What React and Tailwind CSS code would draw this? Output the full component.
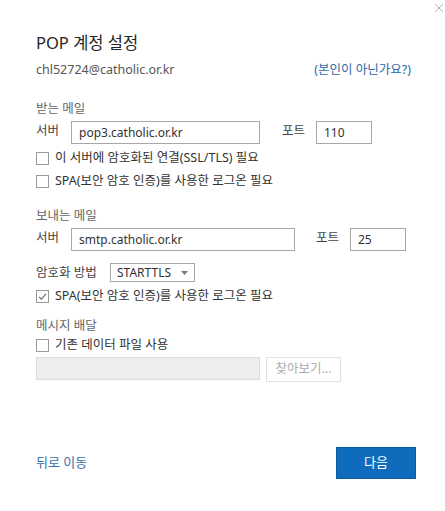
import React from 'react';

const font = { fontFamily: '"Noto Sans", "Noto Sans CJK KR", sans-serif' };

function Check({ checked }) {
  return (
    <span className="w-[13px] h-[13px] border border-[#9a9a9a] bg-white flex items-center justify-center shrink-0">
      {checked && (
        <svg width="9" height="9" viewBox="0 0 9 9" fill="none">
          <path d="M1 4.8 L3.4 7.2 L8 1.8" stroke="#6b6b6b" strokeWidth="1.1" />
        </svg>
      )}
    </span>
  );
}

function CheckRow({ checked, label, className = '' }) {
  return (
    <label className={`flex items-center gap-[6px] h-[20px] text-[12.5px] leading-[20px] text-[#333] ${className}`}>
      <Check checked={checked} />
      <span>{label}</span>
    </label>
  );
}

function TextBox({ value, className = '' }) {
  return (
    <div className={`h-[23px] border border-[#a8a8a8] bg-white px-[7px] flex items-center text-[12px] text-[#333] ${className}`}>
      {value}
    </div>
  );
}

export default function App() {
  return (
    <div className="w-[445px] h-[511px] bg-white flex flex-col" style={font}>
      {/* 닫기 */}
      <div className="flex justify-end pt-[3px] pr-[1px] h-[14px]">
        <svg width="10" height="10" viewBox="0 0 10 10">
          <path d="M1 1 L9 9 M9 1 L1 9" stroke="#b5b5b5" strokeWidth="1" />
        </svg>
      </div>

      <div className="px-[36px] flex flex-col">
        <h1 className="mt-[17px] text-[16.5px] leading-[24px] text-[#262626]">POP 계정 설정</h1>
        <div className="mt-[5px] flex justify-between items-center h-[20px] text-[12.5px] leading-[20px]">
          <span className="text-[#555]">chl52724@catholic.or.kr</span>
          <a className="text-[#2f6aa6] mr-[-2px]">(본인이 아닌가요?)</a>
        </div>

        {/* 받는 메일 */}
        <div className="mt-[19px] h-[20px] text-[12.5px] leading-[20px] text-[#666]">받는 메일</div>
        <div className="mt-[2px] flex items-start h-[23px]">
          <span className="w-[35px] text-[12.5px] leading-[20px] text-[#444]">서버</span>
          <TextBox value="pop3.catholic.or.kr" className="w-[189px]" />
          <span className="ml-[22px] w-[34px] text-[12.5px] leading-[20px] text-[#444]">포트</span>
          <TextBox value="110" className="w-[56px]" />
        </div>
        <CheckRow className="mt-[4px]" label="이 서버에 암호화된 연결(SSL/TLS) 필요" />
        <CheckRow className="mt-[3px]" label="SPA(보안 암호 인증)를 사용한 로그온 필요" />

        {/* 보내는 메일 */}
        <div className="mt-[15px] h-[20px] text-[12.5px] leading-[20px] text-[#666]">보내는 메일</div>
        <div className="mt-[2px] flex items-start h-[23px]">
          <span className="w-[35px] text-[12.5px] leading-[20px] text-[#444]">서버</span>
          <TextBox value="smtp.catholic.or.kr" className="w-[224px]" />
          <span className="ml-[21px] w-[34px] text-[12.5px] leading-[20px] text-[#444]">포트</span>
          <TextBox value="25" className="w-[56px]" />
        </div>
        <div className="mt-[12px] flex items-center h-[19px]">
          <span className="w-[74px] text-[12.5px] leading-[20px] text-[#444]">암호화 방법</span>
          <div className="w-[85px] h-[19px] border border-[#a8a8a8] bg-white pl-[6px] pr-[6px] flex items-center justify-between text-[12px] text-[#333]">
            <span>STARTTLS</span>
            <svg width="7" height="4" viewBox="0 0 7 4">
              <path d="M0 0 H7 L3.5 4 Z" fill="#7a7a7a" />
            </svg>
          </div>
        </div>
        <CheckRow className="mt-[4px]" checked label="SPA(보안 암호 인증)를 사용한 로그온 필요" />

        {/* 메시지 배달 */}
        <div className="mt-[10px] h-[20px] text-[12.5px] leading-[20px] text-[#666]">메시지 배달</div>
        <CheckRow className="mt-[-1px]" label="기존 데이터 파일 사용" />
        <div className="mt-[2px] flex items-start gap-[6px]">
          <div className="w-[224px] h-[23px] bg-[#eeeeee] border border-[#dddddd]" />
          <button className="w-[75px] h-[25px] border border-[#e0e0e0] bg-white text-[12.5px] text-[#aaaaaa] flex items-center justify-center">
            찾아보기...
          </button>
        </div>
      </div>

      <div className="mt-auto mb-[32px] px-[36px] pr-[29px] flex items-center justify-between">
        <a className="text-[13px] text-[#3c6ea6]">뒤로 이동</a>
        <button className="w-[80px] h-[32px] bg-[#0f6cbd] border border-[#0a5a9f] text-white text-[13px] flex items-center justify-center">
          다음
        </button>
      </div>
    </div>
  );
}
